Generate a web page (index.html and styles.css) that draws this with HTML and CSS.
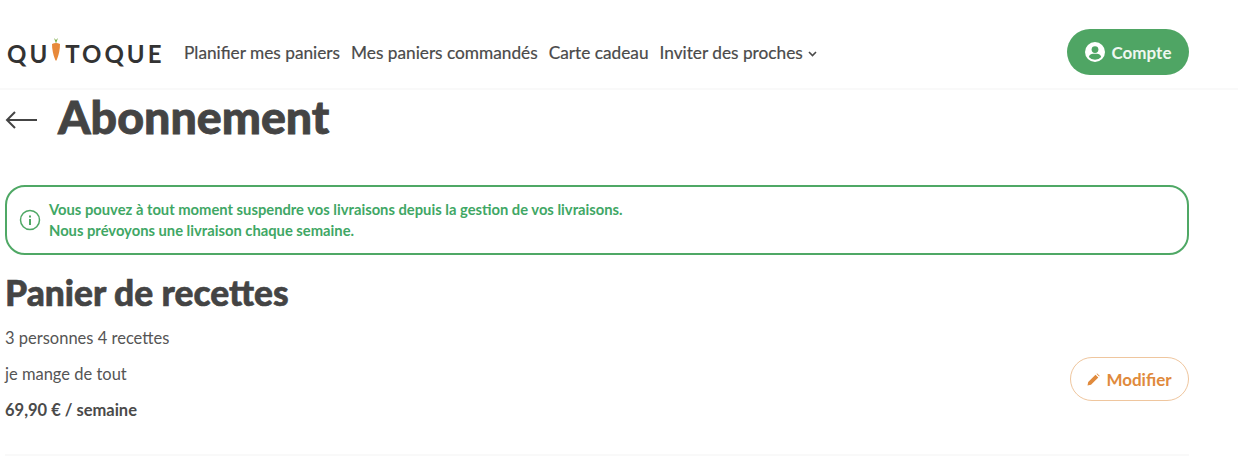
FILE: index.html

```html
<!DOCTYPE html>
<html lang="fr">
<head>
    <meta charset="UTF-8">
    <meta name="viewport" content="width=device-width, initial-scale=1.0">
    <title>Abonnement</title>
    <link rel="stylesheet" href="styles.css">
</head>
<body>
    <header class="header">
        <div class="logo">
            <span>QU</span>
            <svg class="carrot" width="10" height="25" viewBox="0 0 10 24">
                <path d="M5 6 L3 0.5 L5 2.5 L7 0.5 Z" fill="#7fae4a"/>
                <path d="M1 6.5 Q5 4.5 9 6.5 Q9 15 5.5 23 L4.5 23 Q1 15 1 6.5 Z" fill="#e8893a"/>
            </svg>
            <span>TOQUE</span>
        </div>
        <nav class="nav">
            <a class="nav-link">Planifier mes paniers</a>
            <a class="nav-link">Mes paniers commandés</a>
            <a class="nav-link">Carte cadeau</a>
            <a class="nav-link">Inviter des proches
                <svg class="chevron" width="9" height="6" viewBox="0 0 9 6">
                    <path d="M1 1 L4.5 4.5 L8 1" fill="none" stroke="#4a4a4a" stroke-width="1.6"/>
                </svg>
            </a>
        </nav>
        <button class="btn-account">
            <svg width="20" height="20" viewBox="0 0 20 20">
                <circle cx="10" cy="10" r="10" fill="#fff"/>
                <circle cx="10" cy="7.6" r="3.4" fill="#4fa564"/>
                <path d="M3.8 15 Q5 11.8 8 11.8 L12 11.8 Q15 11.8 16.2 15 Q13.8 17.8 10 17.8 Q6.2 17.8 3.8 15 Z" fill="#4fa564"/>
            </svg>
            Compte
        </button>
    </header>

    <main class="page">
        <div class="title-row">
            <svg class="back" width="32" height="20" viewBox="0 0 32 20">
                <path d="M32 10 H2 M10 2 L2 10 L10 18" fill="none" stroke="#444" stroke-width="2"/>
            </svg>
            <h1>Abonnement</h1>
        </div>

        <div class="alert">
            <svg width="22" height="22" viewBox="0 0 22 22">
                <circle cx="11" cy="11" r="9.5" fill="none" stroke="#4fa865" stroke-width="1.5"/>
                <rect x="10" y="10" width="2" height="6" fill="#4fa865"/>
                <rect x="10" y="6.5" width="2" height="2" fill="#4fa865"/>
            </svg>
            <p class="alert-text">
                Vous pouvez à tout moment suspendre vos livraisons depuis la gestion de vos livraisons.<br>
                Nous prévoyons une livraison chaque semaine.
            </p>
        </div>

        <section class="basket">
            <h2>Panier de recettes</h2>
            <div class="basket-row">
                <div>
                    <p class="basket-line">3 personnes 4 recettes</p>
                    <p class="basket-line">je mange de tout</p>
                    <p class="basket-line price">69,90 € / semaine</p>
                </div>
                <button class="btn-edit">
                    <svg width="13" height="13" viewBox="0 0 13 13">
                        <path d="M0.5 12.5 L1.2 9 L8.5 1.7 L11.3 4.5 L4 11.8 Z M9.4 0.8 L10.2 0.4 L12.6 2.8 L12.2 3.6 Z" fill="#e08a3c"/>
                    </svg>
                    Modifier
                </button>
            </div>
        </section>
    </main>
</body>
</html>
```

FILE: styles.css

```css
body {
    margin: 0;
    height: 458px;
    overflow: hidden;
    font-family: 'Lato', sans-serif;
    background: #ffffff;
    color: #4a4a4a;
}
.header {
    display: flex;
    align-items: center;
    height: 72px;
    padding: 16px 0 0 7px;
    border-bottom: 2px solid #f9f9f9;
}
.logo {
    display: flex;
    align-items: center;
    gap: 1px;
    width: 177px;
    font-size: 24px;
    font-weight: 700;
    letter-spacing: 3px;
    color: #333;
    margin-top: 3px;
}
.carrot {
    margin: -8px 3px 0 0;
}
.nav {
    display: flex;
    gap: 11px;
    flex: 1;
    margin-top: 1px;
}
.nav-link {
    font-size: 17.25px;
    color: #4a4a4a;
    -webkit-text-stroke: 0.2px #4a4a4a;
    white-space: nowrap;
}
.chevron {
    margin-left: 1px;
    vertical-align: 2px;
}
.btn-account {
    display: flex;
    align-items: center;
    justify-content: center;
    gap: 7px;
    width: 122px;
    height: 46px;
    margin-right: 49px;
    border: none;
    border-radius: 23px;
    background: #4fa564;
    color: #eef7ef;
    font-family: inherit;
    font-size: 17px;
    font-weight: 700;
}
.page {
    width: 1184px;
    padding-left: 5px;
}
.title-row {
    display: flex;
    align-items: center;
    gap: 21px;
    height: 52px;
}
.title-row h1 {
    margin: 0;
    font-size: 46.5px;
    font-weight: 900;
    color: #444;
    -webkit-text-stroke: 0.8px #444;
}
.back {
    margin-top: 8px;
}
.alert {
    display: flex;
    align-items: center;
    gap: 8px;
    height: 70px;
    box-sizing: border-box;
    margin-top: 43px;
    padding-left: 12px;
    border: 2px solid #4fa865;
    border-radius: 20px;
}
.alert-text {
    margin: 0;
    font-size: 14.75px;
    font-weight: 700;
    line-height: 21px;
    color: #3fa765;
}
.basket {
    padding-bottom: 20px;
    border-bottom: 2px solid #f9f9f9;
}
.basket h2 {
    margin: 19px 0 0;
    font-size: 35.4px;
    line-height: 38px;
    font-weight: 900;
    color: #444;
    -webkit-text-stroke: 0.6px #444;
}
.basket-row {
    display: flex;
    align-items: center;
    justify-content: space-between;
    margin-top: 14px;
}
.basket-line {
    margin: 0 0 12px;
    font-size: 16.5px;
    line-height: 24px;
    color: #555;
}
.price {
    font-weight: 700;
    color: #4a4a4a;
}
.btn-edit {
    display: flex;
    align-items: center;
    justify-content: center;
    gap: 6px;
    width: 119px;
    height: 44px;
    margin-top: -2px;
    background: #fff;
    border: 1.5px solid #efc69e;
    border-radius: 22px;
    color: #e08a3c;
    font-family: inherit;
    font-size: 17px;
    font-weight: 700;
}
```
